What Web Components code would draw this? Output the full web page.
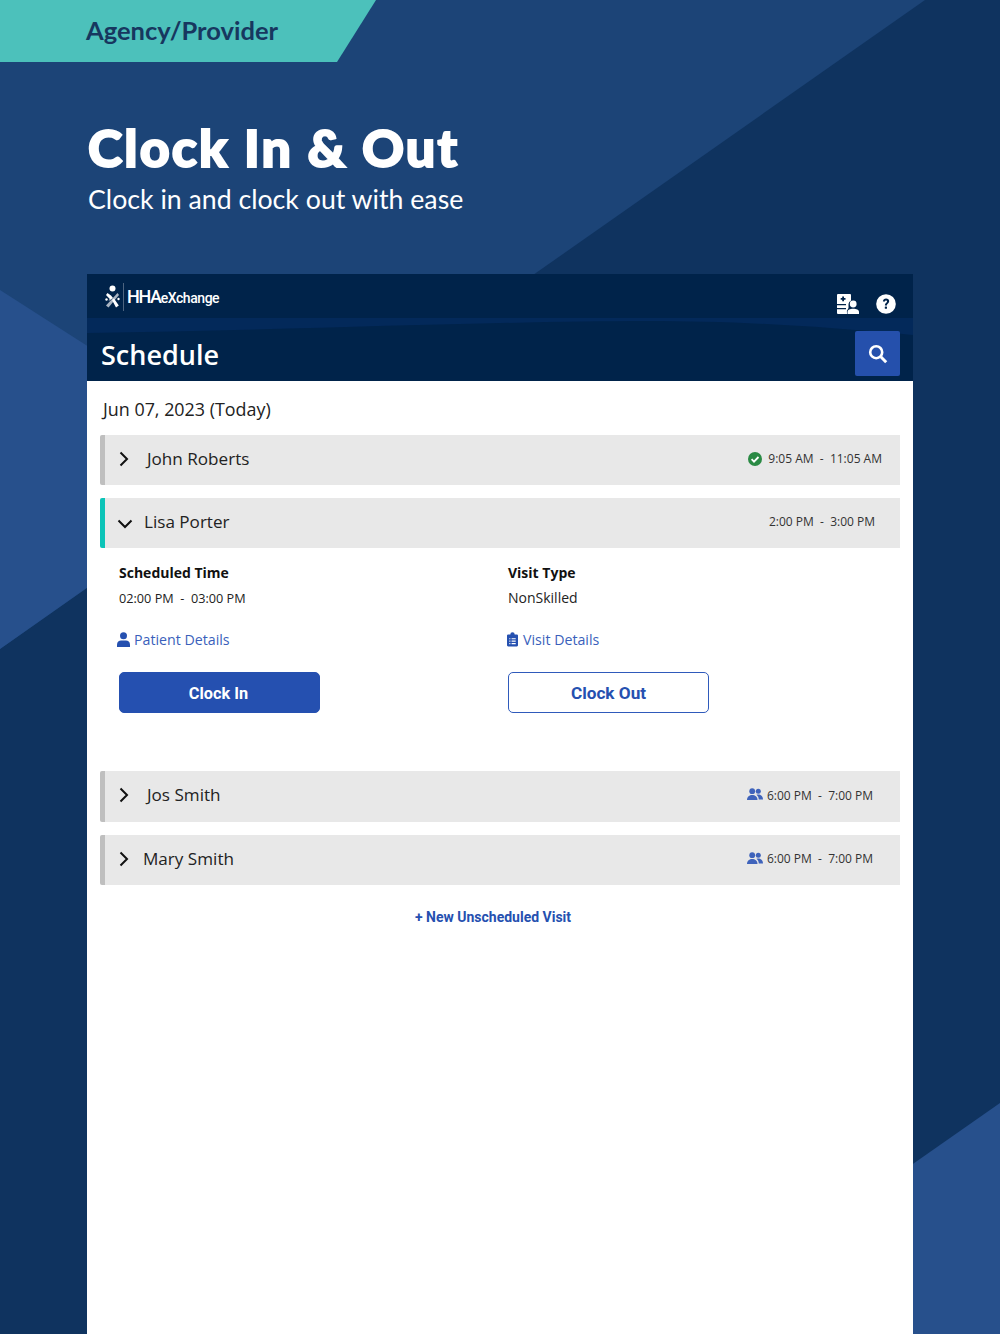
<!DOCTYPE html>
<html>
<head>
<meta charset="utf-8">
<title>Clock In & Out</title>
<style>
  html, body { margin: 0; padding: 0; height: 1334px; overflow: hidden; background: #0f335f; }
</style>
</head>
<body>
<promo-page>
  <promo-tag slot="tag">Agency/Provider</promo-tag>
  <span slot="title">Clock In &amp; Out</span>
  <span slot="subtitle">Clock in and clock out with ease</span>
  <app-card>
    <visit-row name="John Roberts" status="done" name-x="147" time-right="18" style="margin-top:0">9:05 AM&nbsp; - &nbsp;11:05 AM</visit-row>
    <visit-row name="Lisa Porter" open name-x="144" time-right="25">2:00 PM&nbsp; - &nbsp;3:00 PM
      <visit-details slot="details"></visit-details>
    </visit-row>
    <visit-row name="Jos Smith" status="group" name-x="147" time-right="27" tall>6:00 PM&nbsp; - &nbsp;7:00 PM</visit-row>
    <visit-row name="Mary Smith" status="group" name-x="143" time-right="27">6:00 PM&nbsp; - &nbsp;7:00 PM</visit-row>
  </app-card>
</promo-page>

<script>
// page frame: background shapes, tag, headline, card slot
class PromoPage extends HTMLElement {
  constructor() {
    super();
    this.attachShadow({ mode: 'open' }).innerHTML = `
      <style>
        :host { display: block; position: relative; width: 1000px; height: 1334px; overflow: hidden; background: #1c4477; }
        .bg { position: absolute; left: 0; top: 0; }
        .content { position: relative; display: flex; flex-direction: column; height: 100%; }
        .head { padding: 53px 0 0 88px; height: 155px; box-sizing: border-box; }
        .title { font: 900 52px/64px "Lato Black", Lato, sans-serif; color: #fff; letter-spacing: 2.1px; -webkit-text-stroke: 2px #fff; }
        .sub { font: 400 26.700px/36px Lato, sans-serif; color: #fff; padding-top: 1.500px; }
        .card { padding: 57px 87px 0 87px; flex: 1; display: flex; min-height: 0; }
      </style>
      <svg class="bg" width="1000" height="1334" viewBox="0 0 1000 1334">
        <polygon points="925,0 1000,0 1000,1334 0,1334 0,649" fill="#0f335f"/>
        <polygon points="0,290 267,461 0,649" fill="#27508c"/>
        <polygon points="1000,1103 1000,1334 700,1334 700,1313" fill="#27508c"/>
      </svg>
      <div class="content">
        <slot name="tag"></slot>
        <div class="head">
          <div class="title"><slot name="title"></slot></div>
          <div class="sub"><slot name="subtitle"></slot></div>
        </div>
        <div class="card"><slot></slot></div>
      </div>`;
  }
}

class PromoTag extends HTMLElement {
  constructor() {
    super();
    this.attachShadow({ mode: 'open' }).innerHTML = `
      <style>
        :host { display: block; width: 376px; height: 62px; box-sizing: border-box; padding: 11px 0 0 86px;
                background: #4cc1bb; clip-path: polygon(0 0, 100% 0, 337px 100%, 0 100%);
                font: 700 25.500px/38px Lato, sans-serif; color: #17375f; }
      </style><slot></slot>`;
  }
}

// white app panel with the dark header
class AppCard extends HTMLElement {
  constructor() {
    super();
    this.attachShadow({ mode: 'open' }).innerHTML = `
      <style>
        :host { display: block; flex: 1; background: #fff; min-height: 0; }
        header { height: 107px; background: #00234a; position: relative; box-sizing: border-box; overflow: hidden; }
        .wave { position: absolute; left: 0; top: 0; }
        .bar { position: relative; height: 57px; display: flex; align-items: flex-start; }
        .logo { display: flex; align-items: center; margin: 8px 0 0 18px; height: 30px; color: #fff; }
        .sep { width: 1px; height: 28px; background: #4d6480; margin: 0 3px 0 3px; }
        .hha { font: 500 18px/30px Roboto, sans-serif; letter-spacing: -1.3px; }
        .ex { font: 500 14px/32px Roboto, sans-serif; letter-spacing: -.45px; padding-top: 2px; }
        .actions { margin-left: auto; display: flex; gap: 17px; padding: 20px 17px 0 0; }
        .row { position: relative; display: flex; justify-content: space-between; padding: 0 13px 0 14px; }
        h1 { margin: 0; font: 600 27px/48px "Open Sans", sans-serif; color: #fff; }
        .search { width: 45px; height: 45px; background: #2550ac; border-radius: 2px; display: flex; align-items: center; justify-content: center; }
        main { padding: 14px 13px 0 13px; }
        .date { font: 400 17.900px/28px "Open Sans", sans-serif; color: #222; padding: 0 0 12px 3px; }
        .new { display: block; width: 786px; text-align: center; font: 700 14px/20px Roboto, sans-serif; color: #2550b0; margin-top: 22px; }
      </style>
      <header>
        <svg class="wave" width="826" height="107" viewBox="0 0 826 107">
          <path d="M0 44H826V61C720 51 640 47 560 47C420 47 200 56 0 59Z" fill="#03295a"/>
        </svg>
        <div class="bar">
          <div class="logo">
            <svg width="15" height="24" viewBox="0 0 15 24">
              <circle cx="7.500" cy="3.500" r="3" fill="#fff"/>
              <path d="M12.500 8L14 10L3.500 22.500L1 20.500Z" fill="#a9b4c2"/>
              <path d="M2.500 8L1 10L4.800 14L3.500 16L8 13L6 10.500ZM7 15L11 22.500L13.800 20.500L9 13.500Z" fill="#fff"/>
              <circle cx="1.500" cy="14.500" r="1.200" fill="#fff"/><circle cx="13.500" cy="14" r="1.200" fill="#fff"/>
            </svg>
            <span class="sep"></span>
            <span class="hha">HHA</span><span class="ex">eXchange</span>
          </div>
          <div class="actions">
            <svg width="22" height="20" viewBox="0 0 22 20">
              <path d="M0 1A1 1 0 0 1 1 0H13A1 1 0 0 1 14 1V6.500A4.400 4.400 0 0 0 11.500 10V14A7 7 0 0 0 10 20H1A1 1 0 0 1 0 19Z" fill="#fff"/>
              <path d="M5.200 2.500H7V4H8.500V5.800H7V7.300H5.200V5.800H3.700V4H5.200Z" fill="#00234a"/>
              <path d="M0 10H9V11.200H0ZM0 14H9V15.200H0Z" fill="#00234a"/>
              <circle cx="16.200" cy="10" r="3.400" fill="#fff"/>
              <path d="M10.500 20V18C10.500 15.800 13 14.800 16.200 14.800S22 15.800 22 18V20Z" fill="#fff"/>
            </svg>
            <svg width="20" height="20" viewBox="0 0 20 20">
              <circle cx="10" cy="10" r="9.800" fill="#fff"/>
              <path d="M6.900 7.600C7 5.700 8.300 4.600 10.100 4.600C11.900 4.600 13.200 5.700 13.200 7.300C13.200 9.500 10.900 9.500 10.900 11.500H8.900C8.900 8.800 11 8.800 11 7.400C11 6.800 10.600 6.400 10 6.400C9.400 6.400 9 6.900 8.900 7.600Z" fill="#00234a"/>
              <rect x="8.800" y="12.500" width="2.200" height="2.300" rx=".6" fill="#00234a"/>
            </svg>
          </div>
        </div>
        <div class="row">
          <h1>Schedule</h1>
          <div class="search">
            <svg width="20" height="20" viewBox="0 0 20 20" fill="none" stroke="#fff">
              <circle cx="8.200" cy="8.200" r="6" stroke-width="2.600"/>
              <path d="M12.800 12.800L18.200 18.200" stroke-width="3"/>
            </svg>
          </div>
        </div>
      </header>
      <main>
        <div class="date">Jun 07, 2023 (Today)</div>
        <slot></slot>
        <div class="new">+ New Unscheduled Visit</div>
      </main>`;
  }
}

// one accordion row of the day's schedule
class VisitRow extends HTMLElement {
  connectedCallback() {
    if (this.shadowRoot) return;
    const open = this.hasAttribute('open');
    const status = this.getAttribute('status');
    const nameX = Number(this.getAttribute('name-x')) - 100;
    const icons = {
      done: `<svg width="14" height="14" viewBox="0 0 14 14"><circle cx="7" cy="7" r="7" fill="#2a8a44"/><path d="M3.600 7.200L6 9.600L10.500 5" fill="none" stroke="#fff" stroke-width="1.800"/></svg>`,
      group: `<svg width="16" height="13" viewBox="0 0 16 13" style="margin:-2px -2px 0 0"><circle cx="5.200" cy="3.200" r="2.900" fill="#3f63bb"/><circle cx="11.300" cy="3.300" r="2.500" fill="#3f63bb"/><path d="M0 12C0 8.500 2.500 7 5.200 7S10.500 8.500 10.500 12Z" fill="#3f63bb"/><path d="M9.500 6.800C12.500 5.800 16 7.500 16 11.500H11.800C11.600 9.500 11 8 9.500 6.800Z" fill="#3f63bb"/></svg>`
    };
    const chev = open
      ? `<svg width="16" height="10" viewBox="0 0 16 10" style="left:12px;top:21px"><path d="M1.500 1.500L8 8L14.500 1.500" fill="none" stroke="#111" stroke-width="2"/></svg>`
      : `<svg width="10" height="16" viewBox="0 0 10 16" style="left:14px;top:16px"><path d="M1.500 1.500L8 8L1.500 14.500" fill="none" stroke="#111" stroke-width="2"/></svg>`;
    const rowH = this.hasAttribute('tall') ? 51 : 50;
    this.attachShadow({ mode: 'open' }).innerHTML = `
      <style>
        :host { display: block; margin-top: 13px; }
        .bar { position: relative; display: flex; align-items: center; height: ${rowH}px; box-sizing: border-box;
               background: #e8e8e8; border-left: 5px solid ${open ? '#0cc4b8' : '#bfbfbf'}; border-radius: 2px 0 0 2px;
               padding-left: ${nameX - 5}px; padding-right: ${this.getAttribute('time-right')}px; }
        svg { flex: none; }
        .chev { position: absolute; left: 0; top: 0; }
        .chev svg { position: absolute; }
        .name { font: 400 17.100px/24px "Open Sans", sans-serif; color: #222; margin-top: -3px; }
        .time { margin-left: auto; margin-top: -2px; display: flex; align-items: center; gap: 6px; font: 400 12px/18px "Open Sans", sans-serif; color: #333; white-space: nowrap; }
      </style>
      <div class="bar">
        <span class="chev">${chev}</span>
        <span class="name">${this.getAttribute('name')}</span>
        <span class="time">${icons[status] || ''}<span><slot></slot></span></span>
      </div>
      <slot name="details"></slot>`;
  }
}

// expanded part of a row: times, links and clock buttons
class VisitDetails extends HTMLElement {
  constructor() {
    super();
    this.attachShadow({ mode: 'open' }).innerHTML = `
      <style>
        :host { display: grid; grid-template-columns: 389px 201px; padding: 14px 0 0 19px; height: 210px; box-sizing: border-box; font-family: "Open Sans", sans-serif; color: #222; }
        .col { display: flex; flex-direction: column; align-items: flex-start; }
        b { font: 700 14px/22px "Open Sans", sans-serif; color: #111; }
        .val { font: 400 12.700px/28px "Open Sans", sans-serif; margin-top: 0; }
        .val.big { font-size: 14px; }
        a { display: flex; align-items: center; gap: 4px; margin: 16px 0 0 -2px; font: 400 14.200px/24px "Open Sans", sans-serif; color: #3a5fbb; }
        a.v { margin-left: -1px; gap: 5px; }
        a svg { margin-top: -1px; }
        button { display: block; width: 201px; height: 41px; margin-top: 20px; padding: 3px 2px 0 0; border-radius: 5px; font: 700 16.300px/1 Roboto, sans-serif; cursor: pointer; box-sizing: border-box; }
        .in { background: #2550b0; border: 1px solid #2550b0; color: #fff; }
        .out { background: #fff; border: 1px solid #2f5abb; color: #2550b0; font-size: 17.200px; padding-right: 0; }
      </style>
      <div class="col">
        <b>Scheduled Time</b>
        <span class="val">02:00 PM&nbsp; - &nbsp;03:00 PM</span>
        <a><svg width="13" height="15" viewBox="0 0 13 15"><circle cx="6.500" cy="3.800" r="3.500" fill="#2550b0"/><path d="M0 15V12.500C0 10 2 8.500 4 8.500H9C11 8.500 13 10 13 12.500V15Z" fill="#2550b0"/></svg>Patient Details</a>
        <button class="in">Clock In</button>
      </div>
      <div class="col">
        <b>Visit Type</b>
        <span class="val big">NonSkilled</span>
        <a class="v"><svg width="11" height="15" viewBox="0 0 12 15"><path d="M1.200 2H3.600A2.400 2.400 0 0 1 8.400 2H10.800A1.200 1.200 0 0 1 12 3.200V13.800A1.200 1.200 0 0 1 10.800 15H1.200A1.200 1.200 0 0 1 0 13.800V3.200A1.200 1.200 0 0 1 1.200 2Z" fill="#2550b0"/><path d="M2.500 6H3.700V7.200H2.500ZM5 6H9.500V7.200H5ZM2.500 8.700H3.700V9.900H2.500ZM5 8.700H9.500V9.900H5ZM2.500 11.400H3.700V12.600H2.500ZM5 11.400H9.500V12.600H5Z" fill="#fff"/></svg>Visit Details</a>
        <button class="out">Clock Out</button>
      </div>`;
  }
}

customElements.define('promo-page', PromoPage);
customElements.define('promo-tag', PromoTag);
customElements.define('app-card', AppCard);
customElements.define('visit-row', VisitRow);
customElements.define('visit-details', VisitDetails);
</script>
</body>
</html>
